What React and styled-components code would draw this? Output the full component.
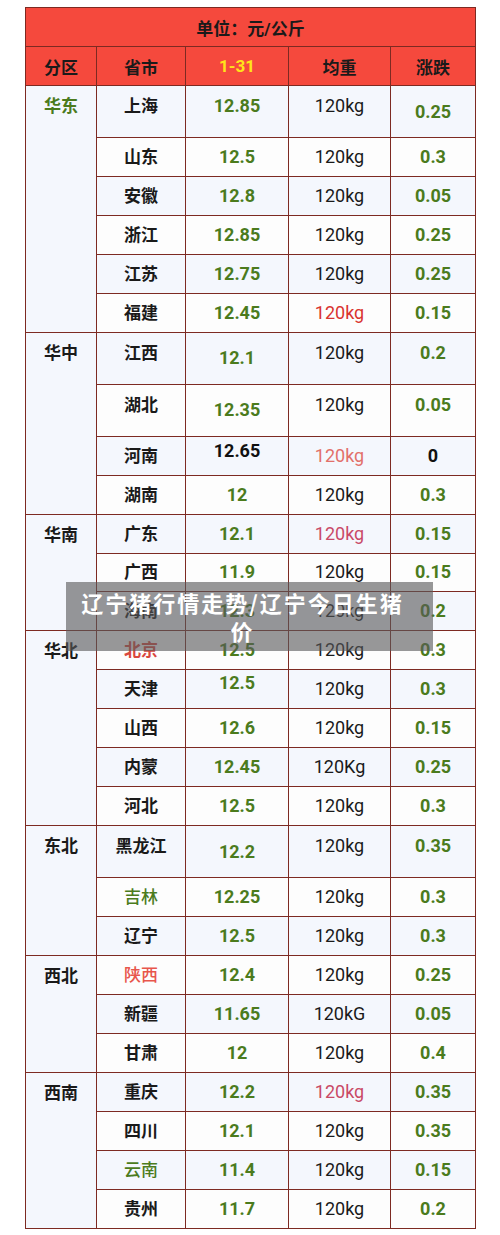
import React from 'react';
import styled, { createGlobalStyle } from 'styled-components';

const GREEN = '#4b7b1d';
const BORDER = '#7d2a22';

const GlobalStyle = createGlobalStyle`
  html, body {
    margin: 0;
    padding: 0;
    background: #ffffff;
    font-family: Roboto, "Noto Sans CJK SC", sans-serif;
  }
`;

const Page = styled.div`
  position: relative;
  width: 500px;
  height: 1235px;
  padding: 7px 0 0 25px;
  box-sizing: border-box;
`;

const Table = styled.table`
  width: 450px;
  border-collapse: collapse;
  table-layout: fixed;
  border: 1px solid ${BORDER};
`;

const TitleCell = styled.th`
  height: 38px;
  padding: 0;
  background: #f5493d;
  border: 1px solid ${BORDER};
  color: #1a1a1a;
  font-size: 17px;
  font-weight: 700;
  text-align: center;
  vertical-align: middle;
`;

const HeadCell = styled.th`
  height: 38px;
  padding: 0;
  background: #f5493d;
  border: 1px solid ${BORDER};
  color: ${(p) => p.$color || '#1a1a1a'};
  font-size: 17px;
  font-weight: 700;
  text-align: center;
  vertical-align: middle;
`;

const Row = styled.tr`
  height: ${(p) => (p.$tall ? '52px' : '38.95px')};
  background: ${(p) => (p.$shade ? '#f4f7fd' : '#fdfdfd')};
`;

const RegionCell = styled.td`
  padding: 9px 0 0;
  background: #f4f7fd;
  border: 1px solid ${BORDER};
  color: ${(p) => p.$color || '#1a1a1a'};
  font-size: 17px;
  font-weight: 700;
  line-height: 22px;
  text-align: center;
  vertical-align: top;
`;

const Cell = styled.td`
  padding: 0 0 ${(p) => (p.$lift ? `${p.$lift * 2}px` : '0')};
  border: 1px solid ${BORDER};
  color: ${(p) => p.$color || '#1a1a1a'};
  font-size: ${(p) => (p.$num ? '18px' : '17px')};
  font-weight: ${(p) => p.$weight || 700};
  line-height: 22px;
  text-align: center;
  vertical-align: middle;
  white-space: nowrap;
`;

const Caption = styled.div`
  position: absolute;
  left: 66px;
  top: 582px;
  width: 367px;
  height: 69px;
  padding: 6px 22px 0 8px;
  box-sizing: border-box;
  background: rgba(88, 88, 90, 0.62);
  color: #ffffff;
  font-family: "Noto Sans CJK SC", sans-serif;
  font-size: 22px;
  font-weight: 700;
  letter-spacing: 2px;
  line-height: 28px;
  text-align: center;
`;

const groups = [
  {
    region: '华东',
    color: GREEN,
    rows: [
      { name: '上海', price: '12.85', change: '0.25', tall: true, lift: ['name', 'price', 'weight'], amount: 6 },
      { name: '山东', price: '12.5', change: '0.3' },
      { name: '安徽', price: '12.8', change: '0.05' },
      { name: '浙江', price: '12.85', change: '0.25' },
      { name: '江苏', price: '12.75', change: '0.25' },
      { name: '福建', price: '12.45', change: '0.15', weightColor: '#d9342f' },
    ],
  },
  {
    region: '华中',
    rows: [
      { name: '江西', price: '12.1', change: '0.2', tall: true, lift: ['name', 'weight', 'change'], amount: 5 },
      { name: '湖北', price: '12.35', change: '0.05', tall: true, lift: ['name', 'weight', 'change'], amount: 5 },
      { name: '河南', price: '12.65', priceColor: '#111111', change: '0', changeColor: '#111111', weightColor: '#e2706a', lift: ['price'], amount: 5 },
      { name: '湖南', price: '12', change: '0.3' },
    ],
  },
  {
    region: '华南',
    rows: [
      { name: '广东', price: '12.1', change: '0.15', weightColor: '#c94a68' },
      { name: '广西', price: '11.9', change: '0.15' },
      { name: '海南', price: '12.3', change: '0.2' },
    ],
  },
  {
    region: '华北',
    rows: [
      { name: '北京', nameColor: '#d9473e', price: '12.5', change: '0.3' },
      { name: '天津', price: '12.5', change: '0.3', lift: ['price'], amount: 6 },
      { name: '山西', price: '12.6', change: '0.15' },
      { name: '内蒙', price: '12.45', change: '0.25', weight: '120Kg' },
      { name: '河北', price: '12.5', change: '0.3' },
    ],
  },
  {
    region: '东北',
    rows: [
      { name: '黑龙江', price: '12.2', change: '0.35', tall: true, lift: ['name', 'weight', 'change'], amount: 6 },
      { name: '吉林', nameColor: GREEN, nameWeight: 500, price: '12.25', change: '0.3' },
      { name: '辽宁', price: '12.5', change: '0.3' },
    ],
  },
  {
    region: '西北',
    rows: [
      { name: '陕西', nameColor: '#e8564c', nameWeight: 500, price: '12.4', change: '0.25' },
      { name: '新疆', price: '11.65', change: '0.05', weight: '120kG' },
      { name: '甘肃', price: '12', change: '0.4' },
    ],
  },
  {
    region: '西南',
    rows: [
      { name: '重庆', price: '12.2', change: '0.35', weightColor: '#c94a66' },
      { name: '四川', price: '12.1', change: '0.35' },
      { name: '云南', nameColor: GREEN, nameWeight: 500, price: '11.4', change: '0.15' },
      { name: '贵州', price: '11.7', change: '0.2' },
    ],
  },
];

export default function App() {
  let index = 0;

  return (
    <Page>
      <GlobalStyle />
      <Table>
        <colgroup>
          <col style={{ width: 71 }} />
          <col style={{ width: 89 }} />
          <col style={{ width: 103 }} />
          <col style={{ width: 102 }} />
          <col style={{ width: 85 }} />
        </colgroup>
        <thead>
          <tr>
            <TitleCell colSpan={5}>单位：元/公斤</TitleCell>
          </tr>
          <tr>
            <HeadCell>分区</HeadCell>
            <HeadCell>省市</HeadCell>
            <HeadCell $color="#ffe419">1-31</HeadCell>
            <HeadCell>均重</HeadCell>
            <HeadCell>涨跌</HeadCell>
          </tr>
        </thead>
        <tbody>
          {groups.map((group) =>
            group.rows.map((row, i) => {
              const shade = index % 2 === 0;
              index += 1;
              const lift = (key) => (row.lift && row.lift.includes(key) ? row.amount : 0);
              return (
                <Row key={row.name} $tall={row.tall} $shade={shade}>
                  {i === 0 && (
                    <RegionCell rowSpan={group.rows.length} $color={group.color}>
                      {group.region}
                    </RegionCell>
                  )}
                  <Cell $lift={lift('name')} $color={row.nameColor} $weight={row.nameWeight}>
                    {row.name}
                  </Cell>
                  <Cell $num $lift={lift('price')} $color={row.priceColor || GREEN}>
                    {row.price}
                  </Cell>
                  <Cell $num $lift={lift('weight')} $color={row.weightColor || '#1a1a1a'} $weight={400}>
                    {row.weight || '120kg'}
                  </Cell>
                  <Cell $num $lift={lift('change')} $color={row.changeColor || GREEN}>
                    {row.change}
                  </Cell>
                </Row>
              );
            })
          )}
        </tbody>
      </Table>
      <Caption>辽宁猪行情走势/辽宁今日生猪价</Caption>
    </Page>
  );
}
